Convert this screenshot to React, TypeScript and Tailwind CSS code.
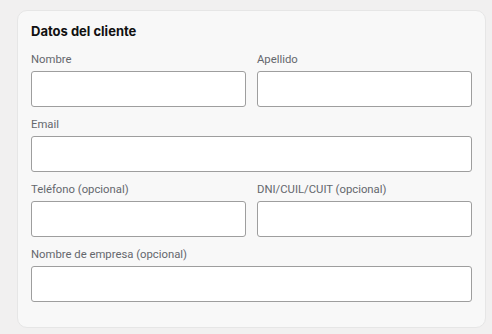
function Field({ label, className = '' }: { label: string; className?: string }) {
  return (
    <div className={`flex flex-col ${className}`}>
      <label
        className="text-[11.3px] leading-[15px] text-[#64676d] mb-[4px]"
        style={{ fontFamily: 'Roboto, "Noto Sans", sans-serif' }}
      >
        {label}
      </label>
      <input
        type="text"
        className="h-[36px] w-full rounded-[3px] border border-[#9e9e9e] bg-white px-2 text-[12px] outline-none"
      />
    </div>
  );
}

export default function App() {
  return (
    <div
      className="min-h-[334px] w-[492px] bg-[#f1f0f0] pt-[10px] pl-[17px] pr-[6px] pb-[7px]"
      style={{ fontFamily: 'Inter, "Noto Sans", sans-serif' }}
    >
      <div className="rounded-[10px] border border-[#e6e6e6] bg-[#f8f8f8] px-[13px] pt-[12px] pb-[25px]">
        <h2 className="text-[13px] leading-[16px] font-bold text-[#111] mb-[13px]">Datos del cliente</h2>
        <div className="grid grid-cols-2 gap-x-[11px] gap-y-[10px]">
          <Field label="Nombre" />
          <Field label="Apellido" />
          <Field label="Email" className="col-span-2" />
          <Field label="Teléfono (opcional)" />
          <Field label="DNI/CUIL/CUIT (opcional)" />
          <Field label="Nombre de empresa (opcional)" className="col-span-2" />
        </div>
      </div>
    </div>
  );
}
